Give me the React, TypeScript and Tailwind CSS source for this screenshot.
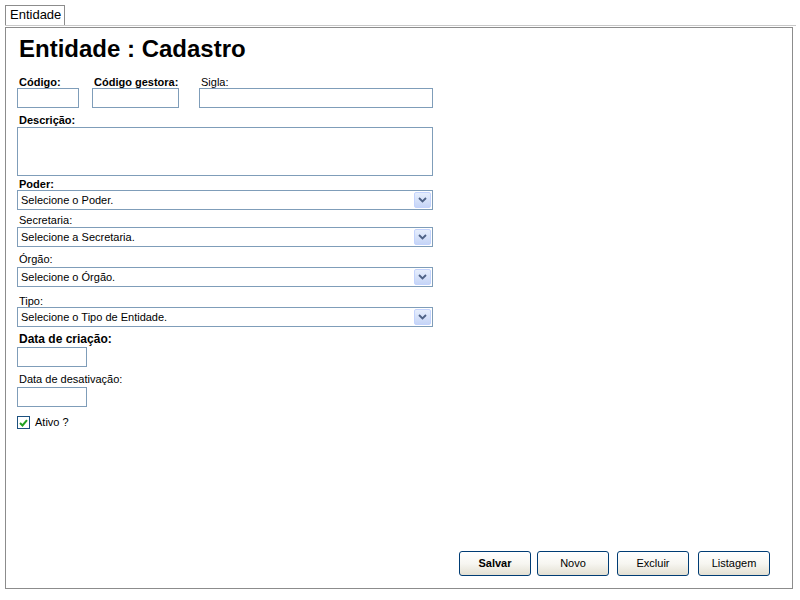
import React from "react";

const font = { fontFamily: '"Liberation Sans", Arial, sans-serif' };

function Chevron() {
  return (
    <svg width="9" height="6" viewBox="0 0 9 6" className="block">
      <path d="M1 1 L4.5 4.5 L8 1" fill="none" stroke="#4d6185" strokeWidth="1.8" />
    </svg>
  );
}

function Select({ text, className = "" }: { text: string; className?: string }) {
  return (
    <div
      className={`relative h-[20px] w-[416px] border border-[#7f9db9] bg-white text-[11px] leading-[18px] pl-[3px] ${className}`}
    >
      {text}
      <div className="absolute right-[1px] top-[1px] h-[16px] w-[17px] rounded-[2px] border border-[#c3d3fd] bg-linear-to-b from-[#e6eefc] to-[#c6d5f7] flex items-center justify-center">
        <Chevron />
      </div>
    </div>
  );
}

function Label({ text, bold = false, className = "" }: { text: string; bold?: boolean; className?: string }) {
  return (
    <div className={`h-[12px] text-[11px] leading-[12px] pl-[2px] ${bold ? "font-bold" : ""} ${className}`}>
      {text}
    </div>
  );
}

function Input({ w, className = "" }: { w: string; className?: string }) {
  return <div className={`h-[20px] border border-[#7f9db9] bg-white ${w} ${className}`} />;
}

function Btn({ text, bold = false, className = "" }: { text: string; bold?: boolean; className?: string }) {
  return (
    <button
      className={`h-[25px] w-[72px] rounded-[3px] border border-[#003c74] bg-linear-to-b from-white via-[#f7f6f1] to-[#e3e0d3] text-[11px] text-black ${bold ? "font-bold" : ""} ${className}`}
    >
      {text}
    </button>
  );
}

export default function App() {
  return (
    <div className="w-[800px] h-[600px] bg-white text-black pt-[5px] pl-[5px]" style={font}>
      {/* tab strip */}
      <div className="w-[791px] h-[21px] border-b border-[#c8c8c8] flex">
        <div className="w-[60px] h-[20px] border-t border-l border-r border-[#8c8c8c] bg-white text-[13px] leading-[18px] pl-[4px]">
          Entidade
        </div>
      </div>

      {/* panel */}
      <div className="mt-[1px] w-[788px] h-[562px] border border-[#8c8c8c] flex flex-col pl-[11px]">
        <div className="mt-[7px] ml-[2px] h-[28px] text-[24px] leading-[28px] font-bold">Entidade : Cadastro</div>

        <div className="mt-[13px] flex">
          <div className="w-[62px]">
            <Label text="Código:" bold />
            <Input w="w-[62px]" />
          </div>
          <div className="w-[87px] ml-[13px]">
            <Label text="Código gestora:" bold />
            <Input w="w-[87px]" />
          </div>
          <div className="w-[234px] ml-[20px]">
            <Label text="Sigla:" />
            <Input w="w-[234px]" />
          </div>
        </div>

        <Label text="Descrição:" bold className="mt-[6px]" />
        <div className="mt-[1px] h-[49px] w-[416px] border border-[#7f9db9] bg-white" />

        <Label text="Poder:" bold className="mt-[2px]" />
        <Select text="Selecione o Poder." />

        <Label text="Secretaria:" className="mt-[4px]" />
        <Select text="Selecione a Secretaria." className="mt-[1px]" />

        <Label text="Órgão:" className="mt-[6px]" />
        <Select text="Selecione o Órgão." className="mt-[2px]" />

        <Label text="Tipo:" className="mt-[8px]" />
        <Select text="Selecione o Tipo de Entidade." />

        <div className="mt-[5px] h-[14px] text-[12px] leading-[14px] font-bold pl-[2px]">Data de criação:</div>
        <Input w="w-[70px]" className="mt-[1px]" />

        <Label text="Data de desativação:" className="mt-[6px]" />
        <Input w="w-[70px]" className="mt-[2px]" />

        <div className="mt-[9px] flex items-center h-[13px]">
          <div className="w-[13px] h-[13px] border border-[#1c5180] bg-white flex items-center justify-center">
            <svg width="9" height="8" viewBox="0 0 9 8" className="block">
              <path d="M1 4 L3.5 6.5 L8 1.2" fill="none" stroke="#21a121" strokeWidth="2" />
            </svg>
          </div>
          <span className="ml-[5px] text-[11px] leading-[13px]">Ativo ?</span>
        </div>

        <div className="mt-auto mb-[12px] flex justify-end pr-[22px]">
          <Btn text="Salvar" bold />
          <Btn text="Novo" className="ml-[6px]" />
          <Btn text="Excluir" className="ml-[8px]" />
          <Btn text="Listagem" className="ml-[9px]" />
        </div>
      </div>
    </div>
  );
}
